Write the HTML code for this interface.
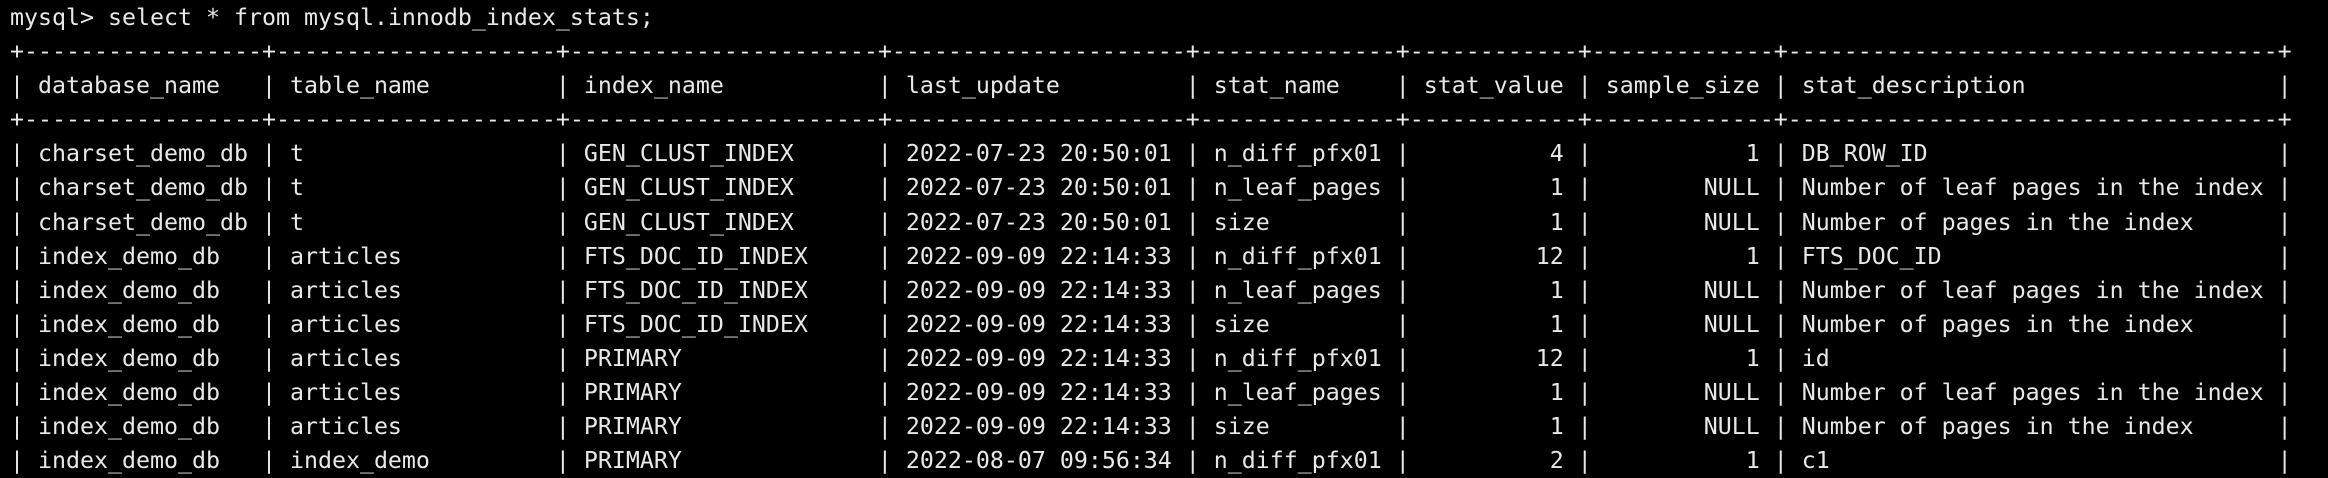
<!DOCTYPE html>
<html><head><meta charset="utf-8"><style>
html,body{margin:0;padding:0;background:#000;width:2328px;height:456px;overflow:hidden}
pre{margin:0;position:absolute;left:10px;top:1px;font-family:"DejaVu Sans Mono","Liberation Mono",monospace;font-size:23.25px;line-height:34.1px;color:#e8e8e8;white-space:pre}
</style></head><body><pre>mysql&gt; select * from mysql.innodb_index_stats;
+-----------------+--------------------+----------------------+---------------------+--------------+------------+-------------+-----------------------------------+
| database_name   | table_name         | index_name           | last_update         | stat_name    | stat_value | sample_size | stat_description                  |
+-----------------+--------------------+----------------------+---------------------+--------------+------------+-------------+-----------------------------------+
| charset_demo_db | t                  | GEN_CLUST_INDEX      | 2022-07-23 20:50:01 | n_diff_pfx01 |          4 |           1 | DB_ROW_ID                         |
| charset_demo_db | t                  | GEN_CLUST_INDEX      | 2022-07-23 20:50:01 | n_leaf_pages |          1 |        NULL | Number of leaf pages in the index |
| charset_demo_db | t                  | GEN_CLUST_INDEX      | 2022-07-23 20:50:01 | size         |          1 |        NULL | Number of pages in the index      |
| index_demo_db   | articles           | FTS_DOC_ID_INDEX     | 2022-09-09 22:14:33 | n_diff_pfx01 |         12 |           1 | FTS_DOC_ID                        |
| index_demo_db   | articles           | FTS_DOC_ID_INDEX     | 2022-09-09 22:14:33 | n_leaf_pages |          1 |        NULL | Number of leaf pages in the index |
| index_demo_db   | articles           | FTS_DOC_ID_INDEX     | 2022-09-09 22:14:33 | size         |          1 |        NULL | Number of pages in the index      |
| index_demo_db   | articles           | PRIMARY              | 2022-09-09 22:14:33 | n_diff_pfx01 |         12 |           1 | id                                |
| index_demo_db   | articles           | PRIMARY              | 2022-09-09 22:14:33 | n_leaf_pages |          1 |        NULL | Number of leaf pages in the index |
| index_demo_db   | articles           | PRIMARY              | 2022-09-09 22:14:33 | size         |          1 |        NULL | Number of pages in the index      |
| index_demo_db   | index_demo         | PRIMARY              | 2022-08-07 09:56:34 | n_diff_pfx01 |          2 |           1 | c1                                |
</pre></body></html>
